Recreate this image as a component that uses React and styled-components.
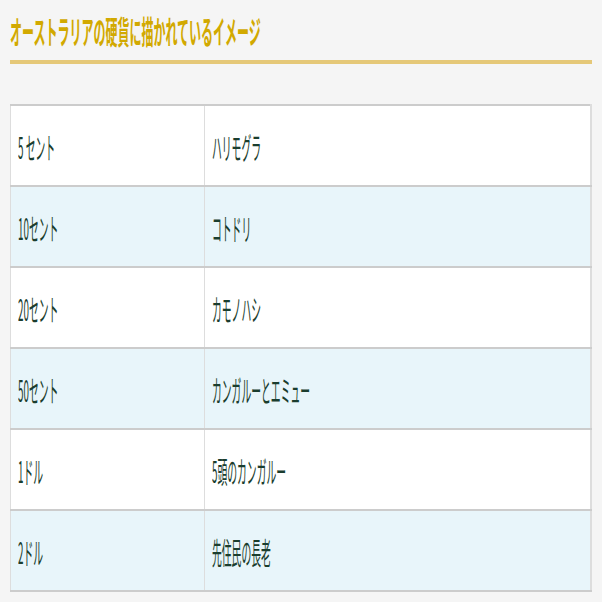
import React from "react";
import styled, { createGlobalStyle } from "styled-components";

const Global = createGlobalStyle`
  html, body { margin: 0; padding: 0; background: #f5f5f5; }
  body { font-family: "Noto Sans CJK JP", "Noto Sans", sans-serif; }
`;

const Page = styled.div`
  width: 602px;
  height: 602px;
  box-sizing: border-box;
  padding: 12px 10px 0 10px;
  overflow: hidden;
`;

const Title = styled.h1`
  margin: 0 0 40px 0;
  padding: 0 0 12px 0;
  height: 36px;
  line-height: 36px;
  font-size: 32px;
  font-weight: 700;
  color: #d2a900;
  border-bottom: 4px solid #e5c878;
  white-space: nowrap;
`;

const Squeeze = styled.span`
  display: inline-block;
  transform: scaleX(${(p) => p.$ratio});
  transform-origin: left center;
  white-space: nowrap;
`;

const Table = styled.table`
  width: 582px;
  border-collapse: collapse;
  border-top: 2px solid #cccccc;
  border-left: 1px solid #dddddd;
  border-right: 2px solid #dddddd;
  background: #ffffff;
`;

const Row = styled.tr`
  height: 81px;
  background: ${(p) => (p.$alt ? "#e8f5fa" : "#ffffff")};
  border-bottom: 2px solid #cccccc;
`;

const Cell = styled.td`
  padding: 0 0 0 7px;
  vertical-align: middle;
  font-size: 30px;
  font-weight: 400;
  line-height: 36px;
  color: #1a3d2e;
  width: ${(p) => p.$w || "auto"};
  border-right: ${(p) => (p.$divider ? "1px solid #dddddd" : "none")};
  box-sizing: border-box;
`;

const rows = [
  ["5 セント", "ハリモグラ"],
  ["10セント", "コトドリ"],
  ["20セント", "カモノハシ"],
  ["50セント", "カンガルーとエミュー"],
  ["1ドル", "5頭のカンガルー"],
  ["2ドル", "先住民の長老"],
];

export default function App() {
  return (
    <>
      <Global />
      <Page>
        <Title>
          <Squeeze $ratio={0.375}>オーストラリアの硬貨に描かれているイメージ</Squeeze>
        </Title>
        <Table>
          <tbody>
            {rows.map(([a, b], i) => (
              <Row key={i} $alt={i % 2 === 1}>
                <Cell $w="194px" $divider>
                  <Squeeze $ratio={0.327}>{a}</Squeeze>
                </Cell>
                <Cell>
                  <Squeeze $ratio={0.327}>{b}</Squeeze>
                </Cell>
              </Row>
            ))}
          </tbody>
        </Table>
      </Page>
    </>
  );
}
